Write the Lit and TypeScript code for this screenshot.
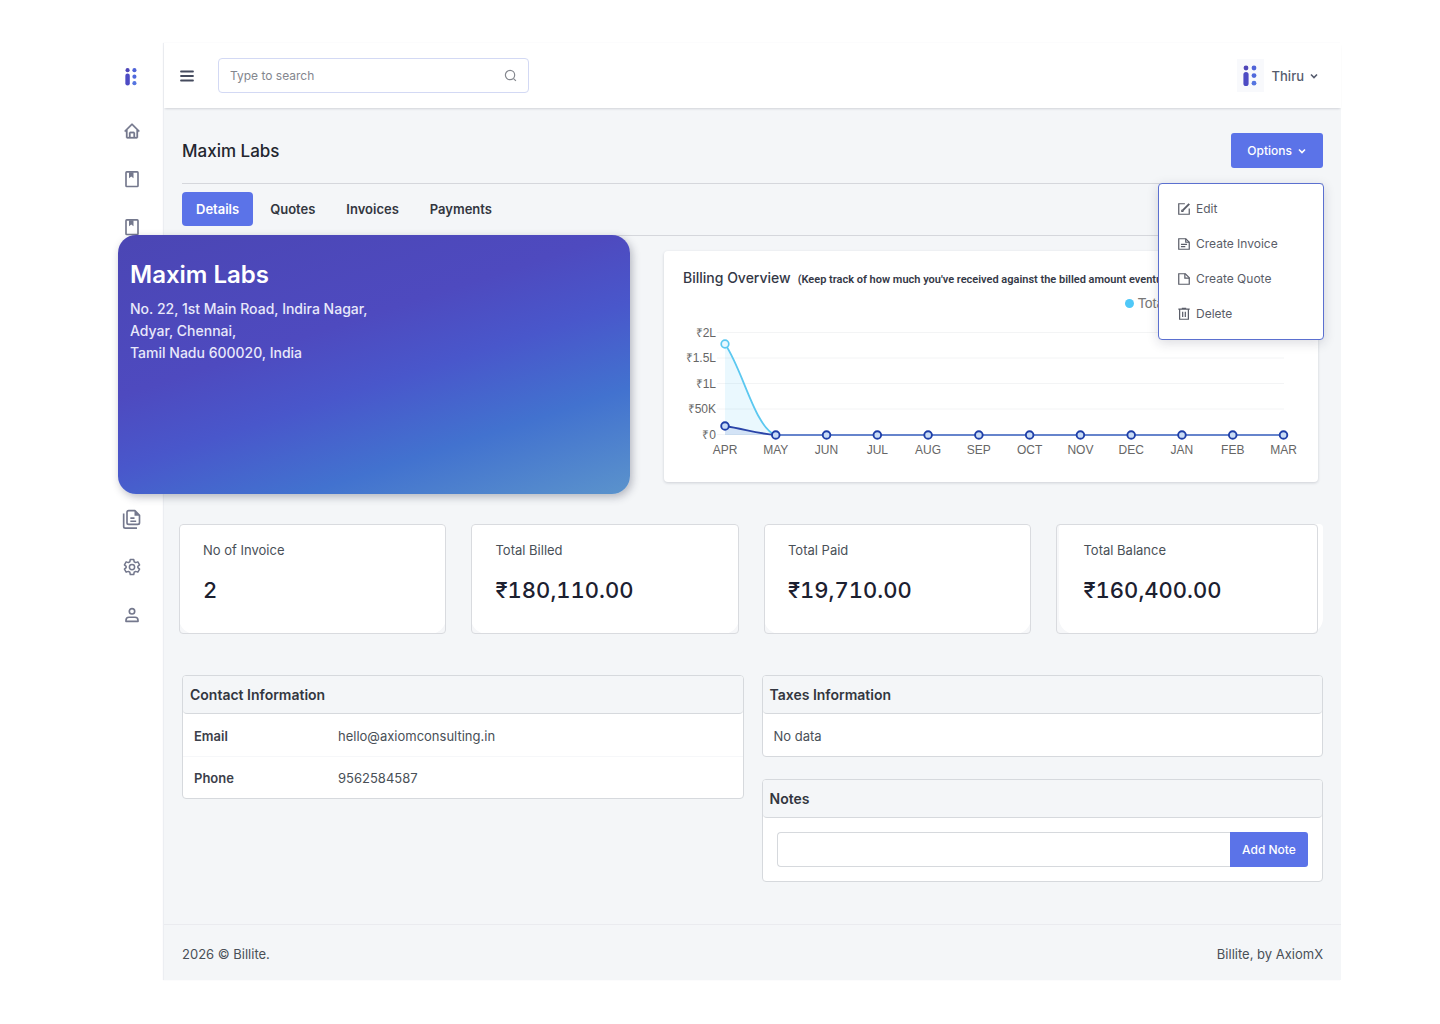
import { LitElement, html, css, svg } from "lit";
import { customElement } from "lit/decorators.js";
import { classMap } from "lit/directives/class-map.js";

const MONTHS = ["APR", "MAY", "JUN", "JUL", "AUG", "SEP", "OCT", "NOV", "DEC", "JAN", "FEB", "MAR"];
const TICKS = ["₹2L", "₹1.5L", "₹1L", "₹50K", "₹0"];

const logo = html`<svg class="logo" viewBox="0 0 14 22" aria-hidden="true">
  <circle cx="3" cy="3" r="2.4" fill="#4f46b8" />
  <rect x="0.4" y="7" width="5.2" height="14" rx="2.6" fill="#4d4bc4" />
  <circle cx="11" cy="3" r="2.4" fill="#4f63d8" />
  <circle cx="11" cy="10.6" r="2.4" fill="#4f68dc" />
  <circle cx="11" cy="18.2" r="2.4" fill="#5575e0" />
</svg>`;

const icons = {
  home: html`<svg viewBox="0 0 24 24"><path fill="currentColor" stroke="currentColor" stroke-width=".4" d="M3 13h1v7c0 1.103.897 2 2 2h12c1.103 0 2-.897 2-2v-7h1a1 1 0 0 0 .707-1.707l-9-9a1 1 0 0 0-1.414 0l-9 9A1 1 0 0 0 3 13zm7 7v-5h4v5h-4zm2-15.586 6 6V15l.001 5H16v-5c0-1.103-.897-2-2-2h-4c-1.103 0-2 .897-2 2v5H6v-9.586l6-6z"/></svg>`,
  book: html`<svg viewBox="0 0 24 24"><rect x="4" y="2.500" width="16" height="19.500" rx="1" fill="none" stroke="currentColor" stroke-width="2.200"/><path fill="currentColor" d="M8 3h6v8l-3-2.500-3 2.500z"/></svg>`,
  files: html`<svg viewBox="0 0 24 24"><path fill="none" stroke="currentColor" stroke-width="2" stroke-linejoin="round" d="M15.500 2H8a2 2 0 0 0-2 2v12.500a2 2 0 0 0 2 2h11a2 2 0 0 0 2-2V7.500zM2 5.500V21a2 2 0 0 0 2 2h14"/><path fill="currentColor" d="M15 2v6h6z"/><path stroke="currentColor" stroke-width="2" d="M10 11h5M10 14.700h7"/></svg>`,
  gear: html`<svg viewBox="0 0 24 24"><g fill="none" stroke="currentColor" stroke-width="2" stroke-linejoin="round"><circle cx="12" cy="12" r="3.500"/><path d="M9.700 2h4.600l.6 3 2 1.150 2.900-1 2.300 4-2.300 2v1.700l2.300 2-2.300 4-2.900-1-2 1.150-.6 3H9.700l-.6-3-2-1.150-2.900 1-2.300-4 2.300-2v-1.700l-2.300-2 2.300-4 2.900 1 2-1.150z"/></g></svg>`,
  user: html`<svg viewBox="0 0 24 24"><g fill="none" stroke="currentColor" stroke-width="2.200"><circle cx="12" cy="7" r="3.600"/><path stroke-linejoin="round" d="M4 20.500v-1.500a4 4 0 0 1 4-4h8a4 4 0 0 1 4 4v1.500z"/></g></svg>`,
  edit: html`<svg viewBox="0 0 16 16"><g fill="none" stroke="currentColor" stroke-width="1.400"><path d="M9 2H2v12h12V7.500"/><path d="M5.500 8.800v1.900h1.900"/><path stroke-width="2.200" d="M6.300 9.900 14 2.200"/></g></svg>`,
  invoice: html`<svg viewBox="0 0 16 16"><g fill="none" stroke="currentColor" stroke-width="1.400"><path d="M2 2h8l4 4v8H2z"/><path d="M10 2v4h4M4.500 8.500h7M4.500 11h5"/></g></svg>`,
  quote: html`<svg viewBox="0 0 16 16"><g fill="none" stroke="currentColor" stroke-width="1.400"><path d="M2 2h7.500L14 6.500V14H2z"/><path d="M9 2v5h5"/></g></svg>`,
  trash: html`<svg viewBox="0 0 16 16"><g fill="none" stroke="currentColor" stroke-width="1.400"><path d="M3 3v11h10V3M1.500 2.500h13M5.500 1.500h5M6.500 5.500v6M9.500 5.500v6"/></g></svg>`,
  chevron: html`<svg class="chevron" viewBox="0 0 10 10"><path d="M2 3.500 5 6.500 8 3.500" fill="none" stroke="currentColor" stroke-width="1.600"/></svg>`,
};

const NAV = [
  { icon: icons.home, label: "Home" },
  ...["Quotes", "Invoices", "Payments", "Clients", "Items", "Taxes", "Expenses"].map((label) => ({ icon: icons.book, label })),
  { icon: icons.files, label: "Reports" },
  { icon: icons.gear, label: "Settings" },
  { icon: icons.user, label: "Profile" },
];

const STATS = [
  { label: "No of Invoice", value: "2" },
  { label: "Total Billed", value: "₹180,110.00" },
  { label: "Total Paid", value: "₹19,710.00" },
  { label: "Total Balance", value: "₹160,400.00" },
];

@customElement("billing-chart")
export class BillingChart extends LitElement {
  static styles = css`
    :host { display: block; }
    .plot { display: block; width: 100%; height: auto; }
    .label { font: 12px "Liberation Sans", Arial, sans-serif; fill: #666; }
  `;

  render() {
    const x = (i: number) => 61 + (i * 558.5) / 11;
    const base = 115;
    return html`<svg class="plot" viewBox="0 0 654 142" role="img" aria-label="Billing overview by month">
      ${TICKS.map((t, i) => svg`
        <line x1="53" x2="620" y1=${12.5 + i * 25.5} y2=${12.5 + i * 25.5} stroke="#f3f4f5" />
        <text class="label" x="52" y=${16.5 + i * 25.5} text-anchor="end">${t}</text>`)}
      <path d="M61 24C79 50 91 108 ${x(1)} ${base}H61z" fill="#4fc8f8" fill-opacity=".12" />
      <path d="M61 106C80 109 95 114 ${x(1)} ${base}H61z" fill="#3050c0" fill-opacity=".12" />
      <path d="M61 24C79 50 91 108 ${x(1)} ${base}" fill="none" stroke="#5cc8f0" stroke-width="1.800" />
      <path d="M61 106C80 109 95 114 ${x(1)} ${base}" fill="none" stroke="#2a44a8" stroke-width="2" />
      <line x1=${x(1)} x2=${x(11)} y1=${base} y2=${base} stroke="#6684cc" stroke-width="2" />
      <circle cx="61" cy="24" r="3.800" fill="#e8f8ff" stroke="#5cc8f0" stroke-width="1.700" />
      ${MONTHS.map((m, i) => svg`
        <circle cx=${x(i)} cy=${i ? base : 106} r="3.800" fill="#c9dcf6" stroke="#1f3fa8" stroke-width="1.900" />
        <text class="label" x=${x(i)} y="134" text-anchor="middle">${m}</text>`)}
    </svg>`;
  }
}

@customElement("app-root")
export class AppRoot extends LitElement {
  static styles = css`
    :host {
      display: block;
      min-height: 100vh;
      box-sizing: border-box;
      padding: 43px 99px 44px;
      background: #fff;
      color: #495057;
      font: 13px/20px Inter, "Noto Sans", sans-serif;
    }
    *, *::before, *::after { box-sizing: border-box; }
    button, input { font: inherit; }
    button { border: 0; cursor: pointer; }
    a { color: inherit; text-decoration: none; }
    h1, h2, p, ul { margin: 0; padding: 0; }

    .shell { display: grid; grid-template-columns: 65px minmax(0, 1fr); }
    .sidebar { display: flex; flex-direction: column; align-items: center; padding-top: 24px; color: #74788d; }
    .brand { display: flex; margin: 0 2px 35px 0; }
    .logo { width: 12px; height: 20px; display: block; }
    .nav { display: flex; flex-direction: column; align-items: center; gap: 30px; }
    .nav-item { display: flex; }
    .nav-item svg { width: 18px; height: 18px; }
    .nav-item:nth-child(9) { margin-top: 4px; }
    .nav-item:nth-child(9) svg { width: 20px; height: 20px; margin: -1px; }

    .main { display: flex; flex-direction: column; background: #f4f6f8; box-shadow: -1px 0 1px #eceef2; }
    .topbar { display: flex; align-items: center; height: 65px; padding: 0 22px 0 16px; background: #fff; box-shadow: 0 2px 2px -1px rgba(30, 34, 60, 0.16); }
    .burger { display: flex; padding: 0; background: none; color: #454b5e; }
    .burger svg { width: 14px; height: 14px; }
    .search { display: flex; align-items: center; width: 311px; height: 35px; margin-left: 24px; padding: 0 11px; border: 1px solid #d3d9f4; border-radius: 4px; font-size: 12px; }
    .search-input { flex: 1; min-width: 0; padding: 0; border: 0; outline: 0; background: none; color: #495057; }
    .search-input::placeholder { color: #83868e; opacity: 1; }
    .search svg { width: 13px; height: 13px; color: #85888f; }
    .account { display: flex; align-items: center; margin-left: auto; padding: 0; background: none; color: #555b6d; font-weight: 500; }
    .avatar { display: grid; place-items: center; width: 27px; height: 33px; margin-right: 8px; background: #f8f9fc; }
    .avatar .logo { width: 14px; height: 22px; }
    .chevron { width: 10px; height: 10px; margin-left: 5px; }

    .content { flex: 1; padding: 25px 18px 42px; }
    .heading { position: relative; display: flex; justify-content: space-between; align-items: center; padding-bottom: 15px; border-bottom: 1px solid #d5d7dc; }
    .title { font-size: 17px; line-height: 24px; font-weight: 500; color: #23262f; }
    .primary { background: #5b73e8; color: #fff; font-size: 12px; font-weight: 500; }
    .options { display: flex; align-items: center; height: 35px; padding: 0 16px; border-radius: 3px; }

    .menu { position: absolute; z-index: 3; top: 50px; right: -1px; width: 166px; padding: 7px 0 8px; border: 1px solid #5b70d0; border-radius: 4px; background: #fff; box-shadow: 0 3px 12px rgba(30, 34, 60, 0.16); font-size: 12px; }
    .menu-item { display: flex; align-items: center; gap: 5px; height: 35px; padding: 0 18px; color: #5a5d68; }
    .menu-item svg { width: 14px; height: 14px; }

    .tabs { display: flex; height: 52px; align-items: center; gap: 3px; padding-bottom: 2px; border-bottom: 1px solid #d5d7dc; }
    .tab { height: 34px; padding: 0 14px; border-radius: 4px; background: none; color: #33363f; font-weight: 600; }
    .tab.active { background: #5b73e8; color: #fff; }

    .overview { display: grid; grid-template-columns: 448fr 654fr; gap: 34px; align-items: start; margin: -1px 5px 0 0; }
    .company { position: relative; z-index: 2; min-height: 259px; margin-left: -64px; padding: 26px 12px; border-radius: 18px; background: linear-gradient(162deg, #4b46b4 0%, #4e4abf 38%, #4957cb 55%, #4272cf 75%, #5b93cc 100%); box-shadow: 2px 3px 8px rgba(30, 34, 60, 0.3); color: #e8e8fa; font-size: 14px; line-height: 22px; font-weight: 500; }
    .company-name { margin-bottom: 9px; color: #fff; font-size: 24px; line-height: 28px; font-weight: 600; }
    .chart-card { margin-top: 16px; padding: 17px 0 20px; border-radius: 4px; background: #fff; box-shadow: 0 1px 3px rgba(30, 34, 60, 0.18); overflow: hidden; }
    .chart-head { display: flex; align-items: baseline; gap: 7px; padding-left: 19px; white-space: nowrap; color: #343846; }
    .chart-title { font-size: 14px; line-height: 20px; font-weight: 500; }
    .chart-note { font-family: Roboto, sans-serif; font-size: 11px; line-height: 20px; font-weight: 600; }
    .legend { display: flex; justify-content: flex-end; gap: 12px; padding: 3px 26px 7px 0; color: #777; font: 14px/20px "Liberation Sans", Arial, sans-serif; }
    .legend-item { display: flex; align-items: center; gap: 4px; }
    .legend-item::before { content: ""; width: 9px; height: 9px; border-radius: 50%; background: #4fc8f8; }
    .legend-item.paid::before { background: #2a44a8; }

    .stats { display: grid; grid-template-columns: 268fr 268fr 268fr 262fr; gap: 25px; margin: 30px 5px 0 -3px; }
    .stat { position: relative; border-radius: 4px; background: #f6f7f9; }
    .stat::after { content: ""; position: absolute; inset: 0; border: 1px solid #d9dbdf; border-radius: 4px; pointer-events: none; }
    .stat-body { height: 110px; padding: 16px 24px; border-radius: 4px 4px 16px 16px; background: #fff; }
    .stat:last-child .stat-body { margin: 0 -5px 0 3px; }
    .stat-value { margin-top: 16px; color: #1c2030; font-size: 22px; line-height: 28px; font-weight: 500; font-variant-numeric: tabular-nums; }

    .panels { display: grid; grid-template-columns: 1fr 1fr; gap: 18px; align-items: start; margin-top: 41px; }
    .column { display: grid; gap: 22px; }
    .panel { border: 1px solid #d6d9dd; border-radius: 4px; background: #fff; overflow: hidden; }
    .panel-title { height: 38px; padding: 9px 7px; border-bottom: 1px solid #d6d9dd; border-radius: 0 0 4px 4px; background: #f4f6f8; color: #33363f; font-size: 14px; line-height: 20px; font-weight: 600; }
    .info { width: 100%; border-collapse: collapse; }
    .info th, .info td { height: 42px; padding: 2px 11px 0; text-align: left; }
    .info th { width: 144px; color: #3c404a; font-weight: 600; }
    .info tr + tr { border-top: 1px solid #f6f7f9; }
    .empty { padding: 12px 11px 10px; }
    .note-form { display: flex; padding: 14px; }
    .note-input { flex: 1; min-width: 0; height: 35px; padding: 0 10px; border: 1px solid #d6d9dd; border-right: 0; border-radius: 4px 0 0 4px; background: #fff; outline: 0; }
    .note-button { width: 78px; padding: 0; border-radius: 0 3px 3px 0; }

    .footer { display: flex; justify-content: space-between; align-items: center; height: 56px; padding: 2px 18px 0; border-top: 1px solid #eaebef; }
  `;

  render() {
    return html`<div class="shell">
      <aside class="sidebar">
        <a class="brand" href="#" aria-label="Billite">${logo}</a>
        <nav class="nav">
          ${NAV.map((n) => html`<a class="nav-item" href="#" aria-label=${n.label}>${n.icon}</a>`)}
        </nav>
      </aside>
      <div class="main">
        <header class="topbar">
          <button class="burger" aria-label="Toggle menu">
            <svg viewBox="0 0 14 14"><path d="M1 2.500h12M1 7h12M1 11.500h12" stroke="currentColor" stroke-width="1.800" stroke-linecap="round" /></svg>
          </button>
          <label class="search">
            <input class="search-input" type="text" placeholder="Type to search" aria-label="Type to search" />
            <svg viewBox="0 0 14 14" fill="none" stroke="currentColor" stroke-width="1.300"><circle cx="6.500" cy="6.500" r="5" /><path d="m10.300 10.300 2.500 2.500" /></svg>
          </label>
          <button class="account"><span class="avatar">${logo}</span>Thiru${icons.chevron}</button>
        </header>
        <main class="content">
          <div class="heading">
            <h1 class="title">Maxim Labs</h1>
            <button class="options primary" aria-expanded="true">Options${icons.chevron}</button>
            <div class="menu">
              <a class="menu-item" href="#">${icons.edit}Edit</a>
              <a class="menu-item" href="#">${icons.invoice}Create Invoice</a>
              <a class="menu-item" href="#">${icons.quote}Create Quote</a>
              <a class="menu-item" href="#">${icons.trash}Delete</a>
            </div>
          </div>
          <div class="tabs" role="tablist">
            ${["Details", "Quotes", "Invoices", "Payments"].map((t, i) => html`<button
              class=${classMap({ tab: true, active: i === 0 })} role="tab" aria-selected=${i === 0}>${t}</button>`)}
          </div>
          <section class="overview">
            <article class="company">
              <h2 class="company-name">Maxim Labs</h2>
              <p>No. 22, 1st Main Road, Indira Nagar,</p>
              <p>Adyar, Chennai,</p>
              <p>Tamil Nadu 600020, India</p>
            </article>
            <article class="chart-card">
              <div class="chart-head">
                <h2 class="chart-title">Billing Overview</h2>
                <span class="chart-note">(Keep track of how much you've received against the billed amount eventually)</span>
              </div>
              <div class="legend"><span class="legend-item">Total Billed</span><span class="legend-item paid">Total Paid</span></div>
              <billing-chart></billing-chart>
            </article>
          </section>
          <section class="stats">
            ${STATS.map((s) => html`<article class="stat"><div class="stat-body">
              <p>${s.label}</p><p class="stat-value">${s.value}</p>
            </div></article>`)}
          </section>
          <section class="panels">
            <article class="panel">
              <h2 class="panel-title">Contact Information</h2>
              <table class="info">
                <tr><th scope="row">Email</th><td>hello@axiomconsulting.in</td></tr>
                <tr><th scope="row">Phone</th><td>9562584587</td></tr>
              </table>
            </article>
            <div class="column">
              <article class="panel">
                <h2 class="panel-title">Taxes Information</h2>
                <p class="empty">No data</p>
              </article>
              <article class="panel">
                <h2 class="panel-title">Notes</h2>
                <form class="note-form" @submit=${(e: Event) => e.preventDefault()}>
                  <input class="note-input" type="text" aria-label="Note" />
                  <button class="note-button primary">Add Note</button>
                </form>
              </article>
            </div>
          </section>
        </main>
        <footer class="footer"><span>2026 © Billite.</span><span>Billite, by AxiomX</span></footer>
      </div>
    </div>`;
  }
}
